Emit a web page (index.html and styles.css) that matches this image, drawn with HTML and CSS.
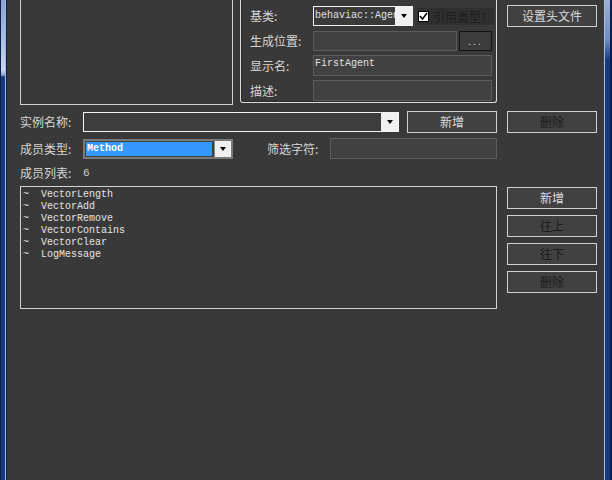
FILE: index.html
```html
<!DOCTYPE html>
<html lang="zh">
<head>
<meta charset="utf-8">
<title>Agent</title>
<link rel="stylesheet" href="styles.css">
</head>
<body>
<div class="window">
  <div class="frame-l"></div>
  <div class="content">
    <div class="row-top">
      <div class="preview-box"></div>
      <div class="group">
        <div class="g-row r1">
          <span class="label">基类:</span>
          <div class="combo white">
            <span class="combo-text mono">behaviac::Agent</span>
            <span class="drop"><i class="arrow"></i></span>
          </div>
          <div class="check">
            <span class="box"><svg width="9" height="9" viewBox="0 0 9 9"><path d="M1 4 L3.5 7 L8 1" fill="none" stroke="#000" stroke-width="1.6"/></svg></span>
            <span class="check-label">引用类型?</span>
          </div>
        </div>
        <div class="g-row r2">
          <span class="label">生成位置:</span>
          <div class="input w-path"></div>
          <div class="dots">...</div>
        </div>
        <div class="g-row r3">
          <span class="label">显示名:</span>
          <div class="input w-full mono">FirstAgent</div>
        </div>
        <div class="g-row r4">
          <span class="label">描述:</span>
          <div class="input w-full"></div>
        </div>
      </div>
      <div class="btn btn-header">设置头文件</div>
    </div>

    <div class="row row-inst">
      <span class="label">实例名称:</span>
      <div class="combo white inst">
        <span class="combo-text"></span>
        <span class="drop"><i class="arrow"></i></span>
      </div>
      <div class="btn btn-add">新增</div>
      <div class="btn disabled">删除</div>
    </div>

    <div class="row row-type">
      <span class="label">成员类型:</span>
      <div class="combo typecombo">
        <span class="sel mono">Method</span>
        <span class="drop gray"><i class="arrow"></i></span>
      </div>
      <span class="label filter-label">筛选字符:</span>
      <div class="input w-filter"></div>
    </div>

    <div class="row row-count">
      <span class="label">成员列表:</span>
      <span class="count">6</span>
    </div>

    <div class="row row-list">
      <div class="list mono">
        <div class="item"><span class="tilde">~</span>VectorLength</div>
        <div class="item"><span class="tilde">~</span>VectorAdd</div>
        <div class="item"><span class="tilde">~</span>VectorRemove</div>
        <div class="item"><span class="tilde">~</span>VectorContains</div>
        <div class="item"><span class="tilde">~</span>VectorClear</div>
        <div class="item"><span class="tilde">~</span>LogMessage</div>
      </div>
      <div class="btn-col">
        <div class="btn">新增</div>
        <div class="btn disabled">往上</div>
        <div class="btn disabled">往下</div>
        <div class="btn disabled">删除</div>
      </div>
    </div>
  </div>
  <div class="frame-r"></div>
</div>
</body>
</html>
```
FILE: styles.css
```css
* { box-sizing: border-box; }
html, body { margin: 0; padding: 0; }
body {
  width: 612px;
  height: 480px;
  overflow: hidden;
  background: #393939;
  font-family: "Noto Sans CJK SC", "Noto Sans", sans-serif;
  font-size: 12px;
  color: #d6d6d6;
}
.mono { font-family: "Liberation Mono", "DejaVu Sans Mono", monospace; font-size: 10px; }

.window { display: flex; height: 480px; }
.frame-l {
  width: 7px;
  border-left: 1px solid #0b1f4e;
  border-right: 1px solid #0b1f4e;
  box-shadow: inset -1px 0 #9fb8e2;
  background: linear-gradient(to bottom, #8aa2cc 0, #c9d5ea 70px, #8fa6cc 75px, #18397e 77px, #18397e 100%);
}
.frame-r {
  width: 8px;
  border-left: 1px solid #a6bee6;
  border-right: 2px solid #0b1f4e;
  background: linear-gradient(to bottom, #9cb0d2 0, #6f8cc0 40px, #18397e 60px, #18397e 100%);
}
.content {
  flex: 1;
  padding-left: 13px;
  display: flex;
  flex-direction: column;
}

.label { width: 63px; flex: none; white-space: nowrap; line-height: 14px; }

.row-top { display: flex; align-items: flex-start; height: 105px; }
.preview-box {
  width: 213px;
  height: 105px;
  border: 1px solid #d2d2d2;
  border-top: none;
}
.group {
  margin-left: 7px;
  width: 257px;
  height: 103px;
  border: 1px solid #dedede;
  border-top: none;
  border-radius: 0 0 3px 3px;
  box-shadow: inset 1px 0 #2a2a2a, inset 0 -1px #2a2a2a;
  padding: 6px 0 0 9px;
  display: flex;
  flex-direction: column;
  gap: 4px;
}
.g-row { display: flex; align-items: center; }
.g-row.r1 { height: 20px; }
.g-row.r2, .g-row.r3, .g-row.r4 { height: 21px; }

.combo { display: flex; flex: none; height: 20px; }
.combo.white { border: 1px solid #f4f4f4; }
.r1 .combo { width: 100px; }
.combo-text {
  flex: 1;
  overflow: hidden;
  white-space: nowrap;
  padding-left: 1px;
  line-height: 18px;
  color: #e0e0e0;
  background: #3a3a3a;
}
.drop {
  width: 17px;
  flex: none;
  background: #f0f0f0;
  display: flex;
  align-items: center;
  justify-content: center;
}
.arrow {
  display: block;
  width: 0; height: 0;
  border-left: 3px solid transparent;
  border-right: 3px solid transparent;
  border-top: 4px solid #000;
}
.check {
  margin-left: 4px;
  width: 77px;
  height: 17px;
  background: #2f2f2f;
  display: flex;
  align-items: center;
  padding-left: 1px;
}
.check .box {
  width: 11px; height: 11px;
  border: 1px solid #000;
  background: #fff;
  display: flex;
  align-items: center;
  justify-content: center;
}
.check-label { margin-left: 4px; color: #1e1e1e; font-size: 12px; }

.input {
  height: 21px;
  flex: none;
  border: 1px solid #5c5c5c;
  background: #414141;
  color: #e0e0e0;
  line-height: 15px;
  padding-left: 1px;
}
.r2 .input { height: 20px; }
.w-path { width: 144px; }
.w-full { width: 179px; }
.dots {
  margin-left: 2px;
  width: 33px;
  height: 20px;
  border: 1px solid #141414;
  background: #3c3c3c;
  color: #d0d0d0;
  font-size: 10px;
  letter-spacing: 2px;
  text-align: center;
  line-height: 18px;
}

.btn {
  width: 90px;
  height: 22px;
  flex: none;
  border: 1px solid #d0d0d0;
  background: #414141;
  color: #dcdcdc;
  text-align: center;
  line-height: 19px;
}
.btn.disabled { color: #1c1c1c; }
.btn-header { margin-left: 10px; margin-top: 5px; }

.row { display: flex; align-items: center; }
.row-inst { margin-top: 6px; height: 22px; }
.combo.inst { width: 316px; height: 20px; }
.combo.inst .combo-text { background: #3d3d3d; }
.btn-add { margin-left: 8px; margin-right: 10px; }

.row-type { margin-top: 5px; height: 21px; }
.typecombo {
  width: 150px;
  height: 20px;
  border: 2px solid #7a7a7a;
  background: #404040;
}
.typecombo .sel {
  margin: 1px 2px 1px 1px;
  flex: 1;
  background: #3399ff;
  color: #fff;
  font-weight: bold;
  line-height: 14px;
  padding-left: 1px;
}
.typecombo .drop { width: 17px; border-left: 1px solid #8a8a8a; }
.filter-label { margin-left: 34px; }
.w-filter { width: 167px; height: 21px; }

.row-count { margin-top: 7px; height: 14px; }
.count { font-family: "Liberation Mono", monospace; font-size: 11px; color: #d0d0d0; }

.row-list { margin-top: 6px; align-items: flex-start; }
.list {
  width: 477px;
  height: 123px;
  border: 1px solid #d2d2d2;
  padding: 2px 0 0 2px;
  color: #e4e4e4;
}
.item { height: 12px; line-height: 12px; white-space: nowrap; display: flex; }
.tilde { width: 18px; flex: none; }
.btn-col {
  margin-left: 10px;
  margin-top: 1px;
  display: flex;
  flex-direction: column;
  gap: 6px;
}
```
